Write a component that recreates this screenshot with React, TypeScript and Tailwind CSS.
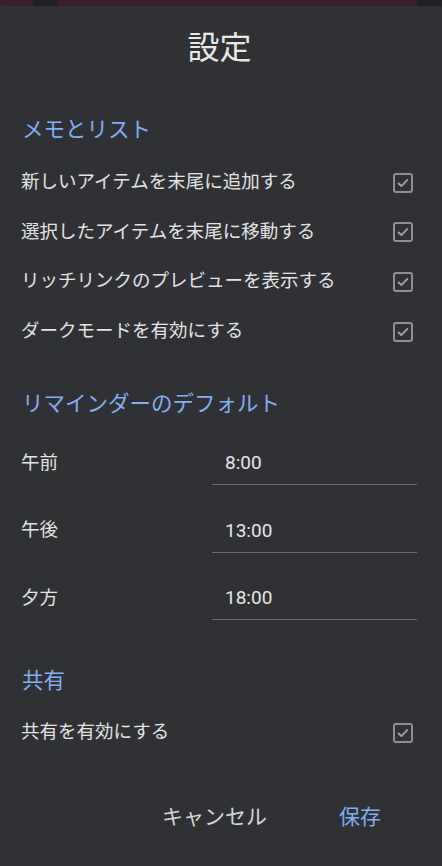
import React, { useState } from 'react';

const CheckBox: React.FC<{ checked: boolean; onToggle: () => void }> = ({ checked, onToggle }) => (
  <button
    type="button"
    onClick={onToggle}
    className="w-5 h-5 shrink-0 rounded-[3px] border-2 border-[#8e8f92] flex items-center justify-center"
  >
    {checked && (
      <svg viewBox="0 0 16 16" className="w-[14px] h-[14px]">
        <path d="M3 8.5l3.2 3L13 4.5" fill="none" stroke="#a0a1a4" strokeWidth="2.2" strokeLinecap="round" strokeLinejoin="round" />
      </svg>
    )}
  </button>
);

const SectionTitle: React.FC<{ children: React.ReactNode; className?: string }> = ({ children, className }) => (
  <h2 className={`text-[21.5px] leading-[28px] text-[#82adf0] ${className ?? ''}`}>{children}</h2>
);

export default function App() {
  const [options, setOptions] = useState([
    { label: '新しいアイテムを末尾に追加する', checked: true },
    { label: '選択したアイテムを末尾に移動する', checked: true },
    { label: 'リッチリンクのプレビューを表示する', checked: true },
    { label: 'ダークモードを有効にする', checked: true },
  ]);
  const [times, setTimes] = useState([
    { label: '午前', value: '8:00' },
    { label: '午後', value: '13:00' },
    { label: '夕方', value: '18:00' },
  ]);
  const [sharing, setSharing] = useState(true);

  const toggle = (i: number) =>
    setOptions((prev) => prev.map((o, idx) => (idx === i ? { ...o, checked: !o.checked } : o)));

  return (
    <div className="h-[866px] w-full overflow-hidden bg-[#3a1e2b] font-[Roboto,'Noto_Sans_CJK_JP',sans-serif]">
      {/* strip behind the dialog */}
      <div className="flex h-[6px]">
        <div className="w-[33px] bg-[#3a1e2b]" />
        <div className="w-[24px] bg-[#1f2023]" />
        <div className="flex-1 bg-[#3a1e2b]" />
        <div className="w-[25px] bg-[#1f2023]" />
      </div>

      <div className="-mt-[4px] h-[864px] rounded-t-[8px] bg-[#303135] pt-[26px] pl-[22px] pr-[25px]">
        <h1 className="text-center text-[32px] leading-[40px] text-[#e8e8e8]">設定</h1>

        <SectionTitle className="mt-[48px]">メモとリスト</SectionTitle>
        <div className="mt-[14px]">
          {options.map((o, i) => (
            <div key={o.label} className="flex h-[49.6px] items-center justify-between pr-[4px]">
              <span className="text-[18.5px] text-[#e3e3e3] -ml-px">{o.label}</span>
              <CheckBox checked={o.checked} onToggle={() => toggle(i)} />
            </div>
          ))}
        </div>

        <SectionTitle className="mt-[34px]">リマインダーのデフォルト</SectionTitle>
        <div className="mt-[23px] flex flex-col gap-[23.5px]">
          {times.map((t, i) => (
            <div key={t.label} className="flex h-[44px] items-center">
              <span className="w-[191px] shrink-0 text-[18.5px] text-[#e3e3e3] -ml-px">{t.label}</span>
              <input
                value={t.value}
                onChange={(e) =>
                  setTimes((prev) => prev.map((x, idx) => (idx === i ? { ...x, value: e.target.value } : x)))
                }
                className="h-[44px] min-w-0 flex-1 border-b border-[#6c6d70] bg-transparent pl-[13px] text-[19px] text-[#e6e6e6] outline-none"
              />
            </div>
          ))}
        </div>

        <SectionTitle className="mt-[47px]">共有</SectionTitle>
        <div className="mt-[13px] flex h-[49.5px] items-center justify-between pr-[4px]">
          <span className="text-[18.5px] text-[#e3e3e3] -ml-px">共有を有効にする</span>
          <CheckBox checked={sharing} onToggle={() => setSharing(!sharing)} />
        </div>

        <div className="mt-[42px] flex h-[36px] items-center justify-end gap-[72px] pr-[36px]">
          <button type="button" className="text-[21px] text-[#d6d6d6]">キャンセル</button>
          <button type="button" className="text-[21px] text-[#82adf0]">保存</button>
        </div>
      </div>
    </div>
  );
}
